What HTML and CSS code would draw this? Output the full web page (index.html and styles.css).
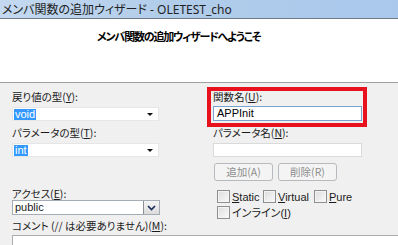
FILE: index.html
```html
<!DOCTYPE html>
<html lang="ja">
<head>
<meta charset="utf-8">
<link rel="stylesheet" href="styles.css">
</head>
<body>
<div class="window">
  <div class="titlebar"><span class="jp">メンバ関数の追加ウィザード</span> - OLETEST_cho</div>
  <div class="header"><h1 class="heading">メンバ関数の追加ウィザードへようこそ</h1></div>
  <div class="body">
    <div class="cols">
      <div class="col-left">
        <div class="lbl">戻り値の型(<u>Y</u>):</div>
        <div class="combo combo-first"><span class="sel">void</span><span class="tri"></span></div>
        <div class="lbl lbl-gap">パラメータの型(<u>T</u>):</div>
        <div class="combo"><span class="sel">int</span><span class="tri"></span></div>
        <div class="lbl lbl-access">アクセス(<u>E</u>):</div>
        <div class="dropdown">
          <span class="dd-text">public</span>
          <span class="dd-btn"><svg width="9" height="6" viewBox="0 0 9 6"><path d="M1 1 L4.5 4.5 L8 1" fill="none" stroke="#1a2a5a" stroke-width="1.6"/></svg></span>
        </div>
        <div class="lbl lbl-comment">コメント (// は必要ありません)(<u>M</u>):</div>
      </div>
      <div class="col-right">
        <div class="highlight">
          <div class="lbl">関数名(<u>U</u>):</div>
          <div class="input input-focus">APPInit</div>
        </div>
        <div class="lbl lbl-param">パラメータ名(<u>N</u>):</div>
        <div class="input input-param"></div>
        <div class="buttons">
          <div class="btn">追加(<u>A</u>)</div>
          <div class="btn">削除(<u>R</u>)</div>
        </div>
        <div class="checks">
          <div class="chk chk-static"><span class="box"></span><span class="ctext"><u>S</u>tatic</span></div>
          <div class="chk chk-virtual"><span class="box"></span><span class="ctext"><u>V</u>irtual</span></div>
          <div class="chk"><span class="box"></span><span class="ctext"><u>P</u>ure</span></div>
        </div>
        <div class="checks checks-second">
          <div class="chk"><span class="box"></span><span class="ctext">インライン(<u>I</u>)</span></div>
        </div>
      </div>
    </div>
    <div class="comment"></div>
  </div>
</div>
</body>
</html>
```

FILE: styles.css
```css
html, body {
  margin: 0;
  padding: 0;
}
body {
  width: 398px;
  height: 245px;
  overflow: hidden;
  background: #f0f0f0;
  font-family: "Liberation Sans", "Noto Sans CJK JP", sans-serif;
  font-size: 11px;
  color: #1b1b1b;
  font-feature-settings: "palt";
}
.window {
  width: 398px;
  height: 245px;
  overflow: hidden;
}
.titlebar {
  height: 18px;
  line-height: 18px;
  padding-left: 2px;
  font-family: "Noto Sans", "Noto Sans CJK JP", sans-serif;
  font-size: 12px;
  color: #222;
  white-space: nowrap;
  background: linear-gradient(90deg, #c4d9f1 0%, #b2cdea 40%, #a9c8ec 100%);
  border-bottom: 1px solid #6f7a86;
}
.titlebar .jp {
  font-family: "Noto Sans CJK JP", sans-serif;
}
.header {
  height: 63px;
  background: #ffffff;
  border-bottom: 1px solid #a0a0a0;
}
.heading {
  margin: 0;
  padding: 10px 0 0 97px;
  font-family: "Noto Sans CJK JP", sans-serif;
  font-size: 11px;
  font-weight: bold;
  line-height: 14px;
  letter-spacing: -1.2px;
  color: #000;
}
.body {
  padding: 4px 0 0 12px;
}
.cols {
  display: grid;
  grid-template-columns: 147px 160px;
  column-gap: 48px;
  align-items: start;
}
.lbl {
  height: 12px;
  line-height: 12px;
  white-space: nowrap;
  font-family: "Noto Sans CJK JP", sans-serif;
  font-size: 10.5px;
}
.col-left {
  padding-top: 4px;
}
.combo {
  position: relative;
  height: 14px;
  margin-top: 4px;
  background: #fff;
  border: 1px solid #e6e6e6;
  box-sizing: border-box;
}
.sel {
  display: inline-block;
  margin: 0 0 0 1px;
  padding: 0 1px;
  height: 11px;
  line-height: 11px;
  background: #3399ff;
  color: #fff;
  font-size: 11px;
}
.tri {
  position: absolute;
  right: 5px;
  top: 5px;
  width: 0;
  height: 0;
  border-left: 3px solid transparent;
  border-right: 3px solid transparent;
  border-top: 3px solid #111;
}
.lbl-gap {
  margin-top: 6px;
}
.lbl-access {
  margin-top: 31px;
}
.dropdown {
  display: flex;
  height: 15px;
  background: #fff;
  border: 1px solid #a5acb5;
  box-sizing: border-box;
  width: 148px;
}
.dd-text {
  flex: 1;
  padding-left: 2px;
  line-height: 13px;
  font-size: 11px;
}
.dd-btn {
  width: 15px;
  display: flex;
  align-items: center;
  justify-content: center;
  background: linear-gradient(#f4f4f4, #dcdcdc);
  border-left: 1px solid #8a8f96;
}
.lbl-comment {
  margin-top: 5px;
}
.highlight {
  border: 4px solid #e8121f;
  padding: 0 1px 2px 2px;
}
.input {
  height: 15px;
  margin-top: 3px;
  background: #fff;
  border: 1px solid #dadada;
  box-sizing: border-box;
  padding-left: 3px;
  line-height: 13px;
  font-size: 11px;
  color: #000;
}
.input-focus {
  border-color: #7da2ce;
}
.lbl-param {
  margin-left: 6px;
}
.input-param {
  margin: 4px 0 0 6px;
  width: 149px;
  height: 14px;
}
.buttons {
  display: flex;
  gap: 5px;
  margin: 6px 0 0 7px;
}
.btn {
  width: 59px;
  height: 18px;
  box-sizing: border-box;
  border: 1px solid #b6b9bd;
  border-radius: 3px;
  background: #f4f4f4;
  color: #8d8d8d;
  text-align: center;
  line-height: 16px;
  font-family: "Noto Sans CJK JP", sans-serif;
  font-size: 10.5px;
}
.btn u {
  text-decoration: none;
}
.checks {
  display: flex;
  margin: 9px 0 0 10px;
  height: 13px;
}
.checks-second {
  margin-top: 3px;
}
.chk {
  display: flex;
  align-items: center;
  height: 13px;
}
.chk-static {
  width: 46px;
}
.chk-virtual {
  width: 51px;
}
.box {
  width: 13px;
  height: 13px;
  box-sizing: border-box;
  border: 1px solid #8f8f8f;
  background: linear-gradient(135deg, #dcdcdc, #fbfbfb);
  box-shadow: inset 0 0 0 1px #f4f4f4;
}
.ctext {
  margin-left: 2px;
  line-height: 12px;
  font-size: 11px;
  font-family: "Liberation Sans", "Noto Sans CJK JP", sans-serif;
  white-space: nowrap;
}
.comment {
  margin-top: 3px;
  height: 20px;
  background: #fff;
  border-top: 1px solid #abadb3;
  border-left: 1px solid #abadb3;
}
```
